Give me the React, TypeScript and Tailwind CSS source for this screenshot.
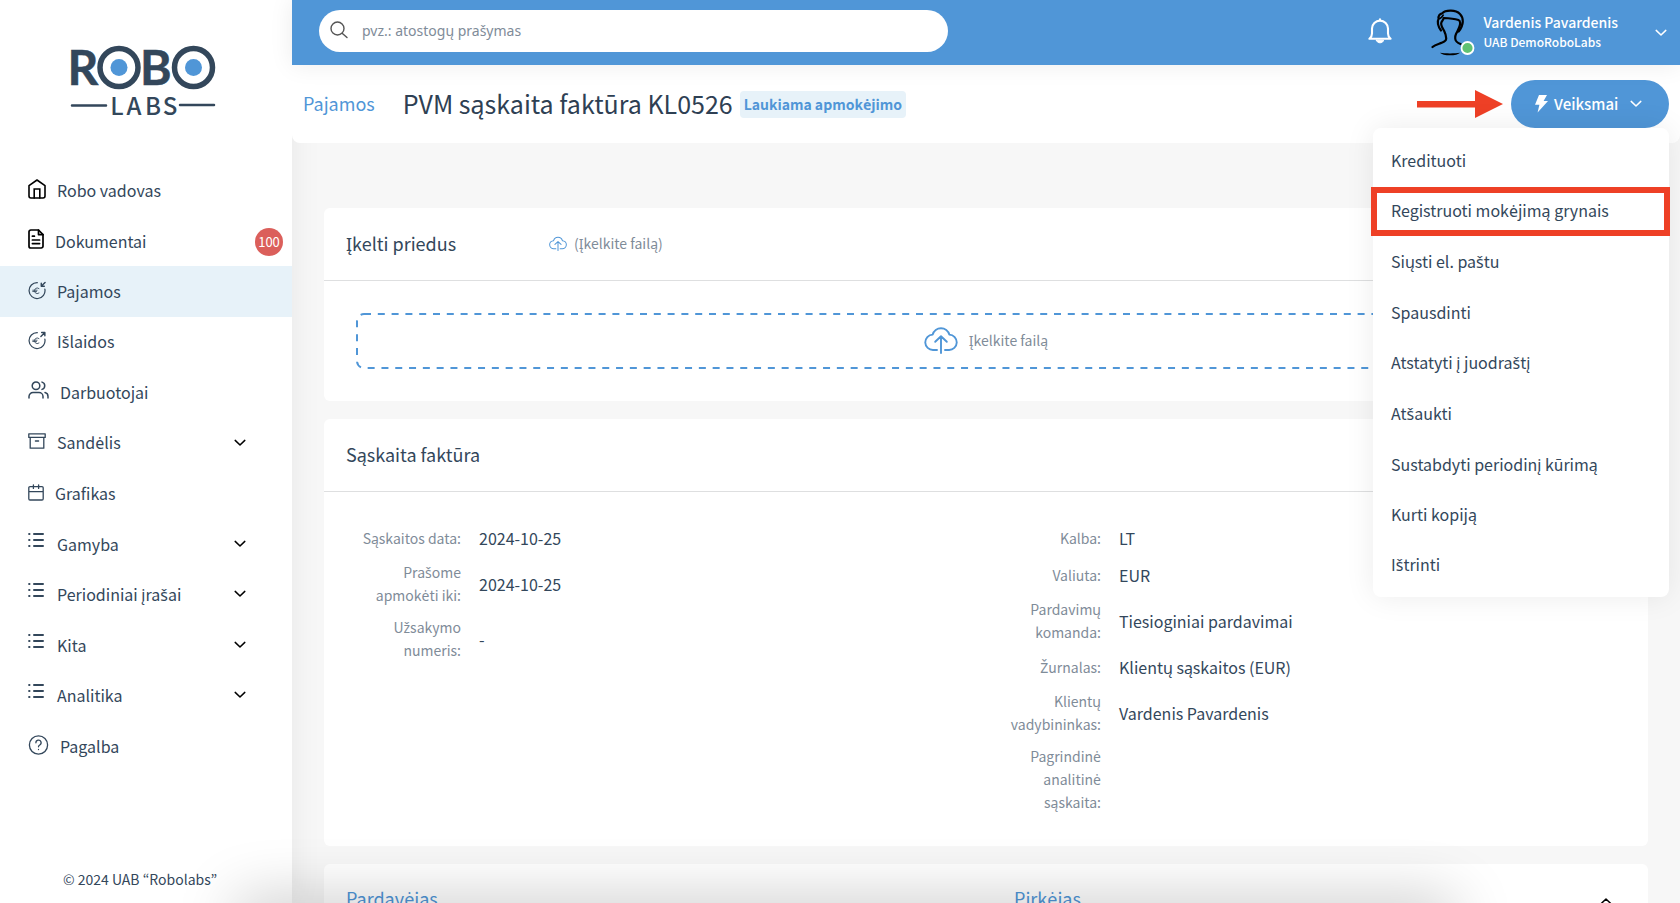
import type { ReactNode } from "react";

type IconProps = { className?: string };

function Lt({ children }: { children: string }) {
  return (
    <span>
      {children.split(/([šžėŠŽĖ])/).map((part, index) =>
        index % 2 ? (
          <span key={index} className="font-['Noto_Sans',sans-serif]">{part}</span>
        ) : (
          part
        ),
      )}
    </span>
  );
}

function Stroke({ box, className, width = 1.5, children }: { box: string; className?: string; width?: number; children: ReactNode }) {
  return (
    <svg viewBox={box} fill="none" stroke="currentColor" strokeWidth={width} strokeLinecap="round" strokeLinejoin="round" className={className} aria-hidden="true">
      {children}
    </svg>
  );
}

const HomeIcon = () => (
  <Stroke box="0 0 18 20" width={1.6} className="mb-0.5 h-5 w-[18px] shrink-0 text-black">
    <path d="M1 6.6 9 1l8 5.6V17a2 2 0 0 1-2 2H3a2 2 0 0 1-2-2Z" />
    <path d="M6.2 19v-9h5.6v9" strokeLinejoin="miter" />
  </Stroke>
);

const DocumentIcon = () => (
  <Stroke box="0 0 16 20" width={1.7} className="mb-1 h-5 w-4 shrink-0 text-black">
    <path d="M10.5 1H2.8A1.8 1.8 0 0 0 1 2.8v14.4A1.8 1.8 0 0 0 2.8 19h10.4a1.8 1.8 0 0 0 1.8-1.8V5.6Z" />
    <path d="M10.5 1v4.6H15M4.4 7.2h2M4.4 11h7.2M4.4 14.6h7.2" />
  </Stroke>
);

const EuroCircle = ({ out }: { out?: boolean }) => (
  <Stroke box="0 0 19 19" width={1.3} className="mb-0.5 h-[19px] w-[18px] shrink-0 text-[#33475b]">
    <path d="M9.800 1.200A8.400 8.400 0 1 0 17.800 8" />
    <path d="M11.600 7.400a3 3 0 1 0 0 4.800M5 9.200h4.600M5 10.600h4" strokeWidth="0.900" />
    {out ? <path d="M13.600 5.200 17.800 1M14.400 1h3.400v3.400" strokeWidth="1.500" /> : <path d="M18 1 14.200 4.800M14 1.800v3.200h3.200" strokeWidth="1.500" />}
  </Stroke>
);
const IncomeIcon = () => <EuroCircle />;
const ExpenseIcon = () => <EuroCircle out />;

const PeopleIcon = () => (
  <Stroke box="0 0 21 18" width={1.5} className="mb-1 h-[18px] w-[21px] shrink-0 text-[#33475b]">
    <circle cx="8" cy="4.8" r="3.8" />
    <path d="M1 17v-1.5a4 4 0 0 1 4-4h6a4 4 0 0 1 4 4V17M14 1.1a3.8 3.8 0 0 1 0 7.3M17 11.6a4 4 0 0 1 3 3.9V17" />
  </Stroke>
);

const ArchiveIcon = () => (
  <Stroke box="0 0 18 16" width={1.3} className="mb-1 h-4 w-[18px] shrink-0 text-[#33475b]">
    <path d="M.8.8h16.4v3.6H.8ZM2.2 4.4v10.8h13.6V4.4M7.4 8h3.2" />
  </Stroke>
);

const CalendarIcon = () => (
  <Stroke box="0 0 16 17" width={1.3} className="mb-0.5 h-[17px] w-4 shrink-0 text-[#33475b]">
    <path d="M2 2.6h12a1.2 1.2 0 0 1 1.2 1.2v11A1.2 1.2 0 0 1 14 16H2a1.2 1.2 0 0 1-1.2-1.2v-11A1.2 1.2 0 0 1 2 2.6ZM.8 7.6h14.400M5.400.8v3.600M10.600.8v3.600" />
  </Stroke>
);

const ListIcon = () => (
  <Stroke box="0 0 18 16" width={2} className="mb-2 h-4 w-[18px] shrink-0 text-[#33475b]">
    <path d="M6 2h9M6 8h9M6 14h9M1.100 2h.4M1.100 8h.4M1.100 14h.4" />
  </Stroke>
);

const HelpIcon = () => (
  <Stroke box="0 0 20 20" width={1.3} className="mb-0.5 h-5 w-[21px] shrink-0 text-[#33475b]">
    <circle cx="10" cy="10" r="9.1" />
    <path d="M7.4 7.8a2.6 2.6 0 1 1 3.9 2.2c-.8.5-1.3.9-1.3 1.8M10 14.4v.2" />
  </Stroke>
);

const ChevronDown = ({ className }: IconProps) => (
  <Stroke box="0 0 12 8" width={1.5} className={className}>
    <path d="m1.200 1.400 4.800 4.600 4.800-4.600" />
  </Stroke>
);

const CloudUpload = ({ className }: IconProps) => (
  <Stroke box="0 0 34 28" width={1.9} className={className}>
    <path d="M13 24H9.200A7.600 7.600 0 0 1 8.700 8.600 8.600 8.600 0 0 1 25.300 8.600 7.600 7.600 0 0 1 24.800 24H21M17 27V10.500M11.200 15.800 17 10.300l5.800 5.500" />
  </Stroke>
);

const Logo = () => (
  <svg viewBox="-10 -20 166 110" className="h-[110px] w-[166px]" role="img" aria-label="Robo Labs">
    <g fill="#33475b" stroke="#33475b" strokeWidth="0.500" fontFamily="Lato, 'Liberation Sans', sans-serif" fontWeight="700" fontSize="48">
      <text x="-2.500" y="40">R</text>
      <text x="70" y="40">B</text>
    </g>
    <g fill="none" stroke="#33475b" strokeWidth="5.500">
      <circle cx="49" cy="22.500" r="19" />
      <circle cx="123.500" cy="22.500" r="19" />
    </g>
    <circle cx="49" cy="22.500" r="8.500" fill="#5096d7" />
    <circle cx="123.500" cy="22.500" r="8.500" fill="#5096d7" />
    <path d="M2 60.500h34M110 60h34" stroke="#33475b" strokeWidth="2.500" strokeLinecap="round" />
    <g fill="#33475b" fontFamily="'Noto Sans CJK JP', sans-serif" fontWeight="500" fontSize="24" textAnchor="middle">
      <text x="47" y="69.500">L</text>
      <text x="64" y="69.500">A</text>
      <text x="83" y="69.500">B</text>
      <text x="100" y="69.500">S</text>
    </g>
  </svg>
);

const Avatar = () => (
  <svg viewBox="0 0 44 48" className="h-12 w-11" role="img" aria-label="Vardenis Pavardenis">
    <g fill="none" stroke="#000" strokeWidth="2.200" strokeLinecap="round" strokeLinejoin="round">
      <path d="M10 21.500C6.800 17.500 6 12.500 7.600 9.800 7 7.200 8.800 4.600 11.200 4.400 13.200 2 17 1.500 20 1.600c8 .2 12 5 11.800 11-.2 4-1.800 7-4.200 9.900" />
      <path d="M1.500 38c2.600-2.400 6.200-3 9.200-4.200 3-1 4.600-1.800 4.500-4.400-.1-2.900-.7-4.800-2-7.400-1.700-3-3.200-5.400-3-7.600.2-2 1.900-2.800 2.500-5.400 5.400.2 11 .8 14.800 2 2.200.8 1.800 3 1.400 5-.5 3-2.500 6-3.900 9-.7 1.600-.9 3.200-.7 5 .2 2.200 2.200 3.800 5.200 5" />
      <path d="M7.800 9.800c2.200-.2 3.400-1.800 4.400-3.600" strokeWidth="1.600" />
    </g>
    <path d="M9 43.800c5 .8 15 .8 20 0-2.600 3.400-17.400 3.400-20 0Z" fill="#000" />
    <circle cx="36.500" cy="39" r="6" fill="#5fc273" stroke="#fff" strokeWidth="1.800" />
  </svg>
);

const navItems: { label: string; Icon: () => ReactNode; active?: boolean; badge?: string; expandable?: boolean }[] = [
  { label: "Robo vadovas", Icon: HomeIcon },
  { label: "Dokumentai", Icon: DocumentIcon, badge: "100" },
  { label: "Pajamos", Icon: IncomeIcon, active: true },
  { label: "Išlaidos", Icon: ExpenseIcon },
  { label: "Darbuotojai", Icon: PeopleIcon },
  { label: "Sandėlis", Icon: ArchiveIcon, expandable: true },
  { label: "Grafikas", Icon: CalendarIcon },
  { label: "Gamyba", Icon: ListIcon, expandable: true },
  { label: "Periodiniai įrašai", Icon: ListIcon, expandable: true },
  { label: "Kita", Icon: ListIcon, expandable: true },
  { label: "Analitika", Icon: ListIcon, expandable: true },
  { label: "Pagalba", Icon: HelpIcon },
];

const actions = [
  "Kredituoti",
  "Registruoti mokėjimą grynais",
  "Siųsti el. paštu",
  "Spausdinti",
  "Atstatyti į juodraštį",
  "Atšaukti",
  "Sustabdyti periodinį kūrimą",
  "Kurti kopiją",
  "Ištrinti",
];

const invoiceFields = [
  { label: "Sąskaitos data:", value: "2024-10-25" },
  { label: "Prašome apmokėti iki:", value: "2024-10-25" },
  { label: "Užsakymo numeris:", value: "-" },
];

const detailFields = [
  { label: "Kalba:", value: "LT" },
  { label: "Valiuta:", value: "EUR" },
  { label: "Pardavimų komanda:", value: "Tiesioginiai pardavimai" },
  { label: "Žurnalas:", value: "Klientų sąskaitos (EUR)" },
  { label: "Klientų vadybininkas:", value: "Vardenis Pavardenis" },
  { label: "Pagrindinė analitinė sąskaita:", value: "" },
];

function Fields({ items }: { items: { label: string; value: string }[] }) {
  return (
    <dl className="flex flex-col gap-[9px]">
      {items.map((item) => (
        <div key={item.label} className="flex items-center gap-[18px]">
          <dt className="w-[115px] text-right text-sm leading-[23px] text-[#7f8c99]">
            <Lt>{item.label}</Lt>
          </dt>
          <dd className="text-base leading-7 text-[#33475b]">{item.value}</dd>
        </div>
      ))}
    </dl>
  );
}

function Sidebar() {
  return (
    <aside className="relative z-10 flex w-[292px] shrink-0 flex-col bg-white shadow-[0_0_30px_rgba(0,0,0,0.07)]">
      <a href="#home" className="flex h-[165px] items-start pt-[25px] pl-[60px]">
        <Logo />
      </a>
      <nav className="grid h-[606px] auto-rows-fr">
        {navItems.map(({ label, Icon, active, badge, expandable }) => (
          <a
            key={label}
            href={`#${label}`}
            className={`flex items-center gap-[11px] pr-[9px] pl-7 text-base text-[#33475b] ${active ? "bg-[#e7f2f9]" : ""}`}
          >
            <Icon />
            <span className="flex-1">
              <Lt>{label}</Lt>
            </span>
            {badge && <span className="mt-0.5 flex size-7 items-center justify-center rounded-full bg-[#db5f5b] text-[13px] leading-7 text-white">{badge}</span>}
            {expandable && <ChevronDown className="mr-[37px] h-2 w-3 text-black" />}
          </a>
        ))}
      </nav>
      <p className="mt-auto pb-3 pl-[63px] text-sm leading-6 text-[#33475b]">© 2024 UAB “Robolabs”</p>
    </aside>
  );
}

function TopBar() {
  return (
    <header className="relative z-30 flex h-[65px] shrink-0 items-center justify-between bg-[#5096d7] pr-[13px] pl-[27px] shadow-[0_0_25px_rgba(0,0,0,0.08)]">
      <label className="mb-1 flex h-[42px] w-[629px] items-center gap-[14px] rounded-full bg-white pl-[11px]">
        <Stroke box="0 0 18 18" width={1.4} className="mb-0.5 size-[18px] text-[#555]">
          <circle cx="7.500" cy="7.500" r="6.500" />
          <path d="m12.400 12.400 4.600 4.200" />
        </Stroke>
        <input
          type="search"
          aria-label="Paieška"
          placeholder="pvz.: atostogų prašymas"
          className="flex-1 bg-transparent font-['Noto_Sans',sans-serif] text-[14px] text-[#33475b] outline-none placeholder:text-[#7f8c99]"
        />
      </label>
      <div className="flex items-center">
        <button type="button" aria-label="Pranešimai" className="mr-[39px] mb-1 text-white">
          <Stroke box="0 0 24 26" width={2.1} className="h-[26px] w-6">
            <path d="M12 1.200v1.400M1.400 20.800h21.200c-1.800-1.400-2.600-2.800-2.600-5.300V10.600a8 8 0 0 0-16 0v4.900c0 2.500-.8 3.900-2.600 5.300Z" />
            <path d="M8.400 22.200h7.200c-.4 1.600-1.700 2.600-3.600 2.600s-3.200-1-3.600-2.600Z" fill="currentColor" strokeWidth="1" />
          </Stroke>
        </button>
        <button type="button" className="flex items-center text-left text-white">
          <Avatar />
          <span className="mr-[37px] mb-0.5 ml-2 font-medium">
            <span className="block text-sm leading-5">Vardenis Pavardenis</span>
            <span className="block text-[12px] leading-5">UAB DemoRoboLabs</span>
          </span>
          <ChevronDown className="h-2 w-3" />
        </button>
      </div>
    </header>
  );
}

function ActionsMenu() {
  return (
    <div className="relative flex items-center gap-2">
      <svg viewBox="0 0 86 28" className="h-7 w-[86px]" aria-hidden="true">
        <path d="M0 11h58V0l28 14-28 14V17.500H0Z" fill="#ee4026" />
      </svg>
      <button type="button" className="flex h-12 w-[158px] items-center rounded-full bg-[#5096d7] pl-6 text-[15px] font-medium text-white">
        <svg viewBox="0 0 13 18" className="mr-1.5 h-[18px] w-[13px]" aria-hidden="true">
          <path d="M4 0h8L8.600 6H13L2.600 17.600 4.400 9.800H0Z" fill="currentColor" />
        </svg>
        Veiksmai
        <ChevronDown className="ml-3 h-2 w-3" />
      </button>
      <div role="menu" className="absolute top-full right-0 w-[296px] rounded-lg bg-white py-[7px] shadow-[0_0_30px_rgba(0,0,0,0.08)]">
        <div className="grid h-[455px] auto-rows-fr">
          {actions.map((action, index) => (
            <button key={action} type="button" role="menuitem" className="relative px-[18px] text-left text-base text-[#33475b]">
              <Lt>{action}</Lt>
              {index === 1 && <span className="absolute top-px -right-px bottom-0 -left-0.5 border-6 border-[#ee4026]" />}
            </button>
          ))}
        </div>
      </div>
    </div>
  );
}

export default function App() {
  return (
    <div className="flex h-screen overflow-hidden bg-[#f7f7f7] font-['Noto_Sans_CJK_JP','Noto_Sans',sans-serif]">
      <Sidebar />
      <div className="flex min-w-0 flex-1 flex-col">
        <TopBar />
        <div className="relative z-20 flex h-[78px] shrink-0 items-center justify-between rounded-b-lg bg-white pr-[11px] pl-[11px]">
          <div className="flex items-center">
            <a href="#pajamos" className="mr-7 pb-0.5 text-lg text-[#5096d7]">Pajamos</a>
            <h1 className="mr-[7px] pb-0.5 text-[25px] leading-8 text-[#2e4053]">PVM sąskaita faktūra KL0526</h1>
            <span className="rounded bg-[#e7f2f9] px-1 text-[14px] leading-[27px] font-bold text-[#5096d7]">
              <Lt>Laukiama apmokėjimo</Lt>
            </span>
          </div>
          <ActionsMenu />
        </div>
        <main className="flex flex-1 flex-col gap-[18px] overflow-hidden px-8 pt-[65px]">
          <section className="shrink-0 rounded-md bg-white">
            <div className="flex h-[73px] items-center border-b border-[#dedfe0] px-[22px] pb-0.5">
              <h2 className="w-[203px] text-lg text-[#33475b]">Įkelti priedus</h2>
              <CloudUpload className="h-[15px] w-[18px] text-[#5096d7]" />
              <span className="ml-[7px] text-sm text-[#7f8c99]">(Įkelkite failą)</span>
            </div>
            <div className="px-8 py-8">
              <button type="button" className="relative flex h-14 w-full items-center justify-center gap-[11px] pb-0.5 text-[14px] text-[#7f8c99]">
                <svg className="absolute inset-0 size-full" aria-hidden="true">
                  <rect x="1" y="1" rx="7" className="h-[calc(100%-2px)] w-[calc(100%-2px)]" fill="none" stroke="#5096d7" strokeWidth="2" strokeDasharray="7 6.800" />
                </svg>
                <CloudUpload className="h-7 w-[34px] text-[#5096d7]" />
                Įkelkite failą
              </button>
            </div>
          </section>
          <section className="shrink-0 rounded-md bg-white">
            <div className="flex h-[73px] items-center border-b border-[#dedfe0] px-[22px] pb-0.5">
              <h2 className="text-lg text-[#33475b]">Sąskaita faktūra</h2>
            </div>
            <div className="grid grid-cols-2 px-[22px] py-8">
              <Fields items={invoiceFields} />
              <Fields items={detailFields} />
            </div>
          </section>
          <section className="grid shrink-0 grid-cols-2 rounded-md bg-white px-[22px] py-[18px] text-lg text-[#5096d7]">
            <h2 className="leading-8">
              <Lt>Pardavėjas</Lt>
            </h2>
            <div className="flex items-center justify-between pl-7">
              <h2 className="leading-8">
                <Lt>Pirkėjas</Lt>
              </h2>
              <button type="button" aria-label="Suskleisti" className="mt-1 mr-[14px] text-black">
                <ChevronDown className="h-2 w-3 rotate-180" />
              </button>
            </div>
          </section>
        </main>
      </div>
      <div className="pointer-events-none fixed top-full right-[230px] left-[240px] z-40 h-10 shadow-[0_0_60px_4px_rgba(0,0,0,0.22)]" />
    </div>
  );
}
